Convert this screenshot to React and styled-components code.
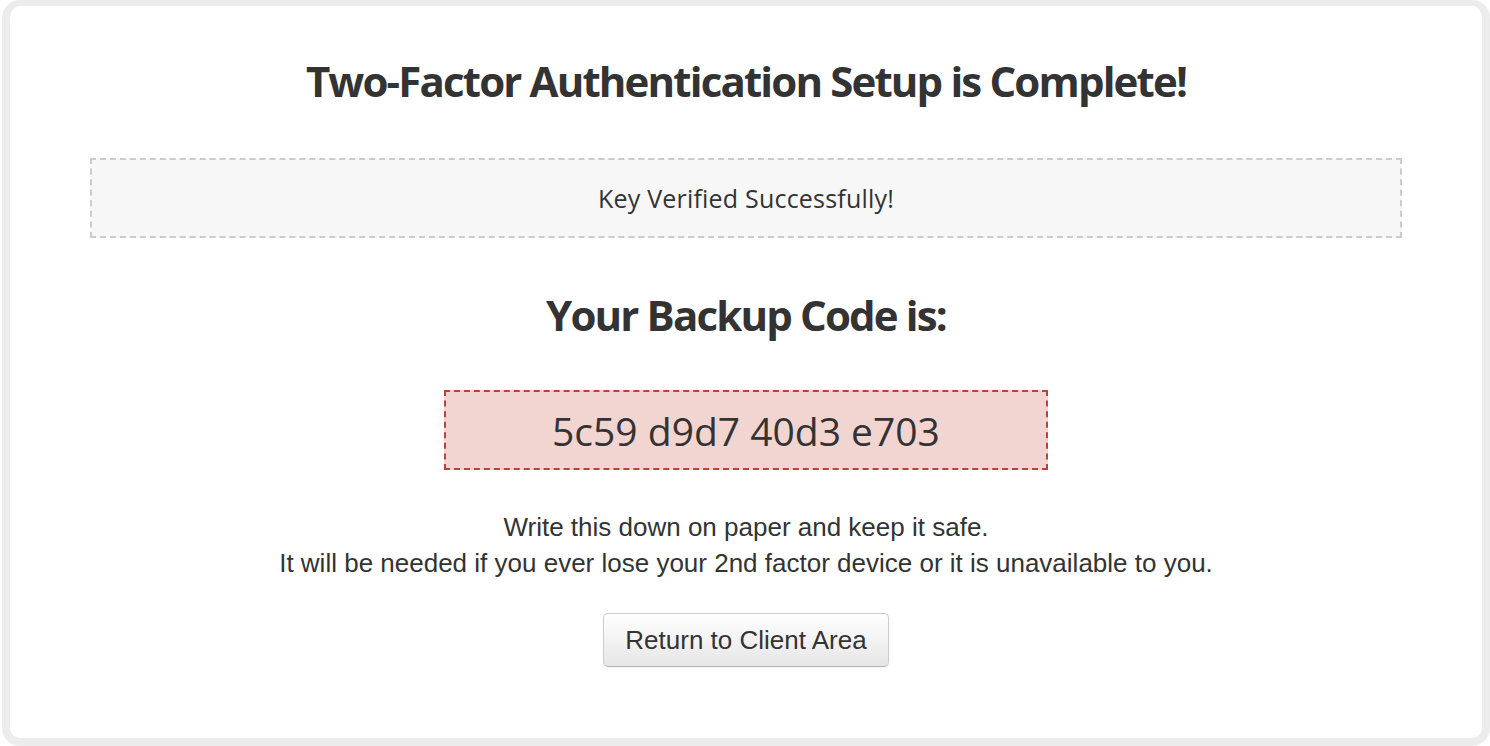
import React from "react";
import styled, { createGlobalStyle } from "styled-components";

const GlobalStyle = createGlobalStyle`
  html, body {
    margin: 0;
    padding: 0;
    background: #ffffff;
  }
  body {
    font-family: "Liberation Sans", Arial, sans-serif;
    color: #333333;
  }
`;

const Frame = styled.div`
  box-sizing: border-box;
  width: 1488px;
  height: 746px;
  margin-left: 2px;
  border: 8px solid #ececec;
  border-top-width: 6px;
  border-radius: 18px;
  background: #ffffff;
  display: flex;
  flex-direction: column;
  align-items: center;
  padding-top: 52px;
`;

const Heading = styled.h1`
  margin: ${(p) => p.$top || 0}px 0 0;
  font-family: "Open Sans", sans-serif;
  font-weight: 700;
  font-size: 42px;
  line-height: 46px;
  letter-spacing: -1.85px;
  color: #333333;
  text-align: center;
`;

const Notice = styled.div`
  box-sizing: border-box;
  align-self: stretch;
  margin: 54px 80px 0;
  height: 80px;
  border: 2px dashed #cccccc;
  background: #f7f7f7;
  display: flex;
  align-items: center;
  justify-content: center;
  font-family: "Open Sans", sans-serif;
  font-size: 25px;
  letter-spacing: 0.2px;
  color: #333333;
`;

const CodeBox = styled.div`
  box-sizing: border-box;
  margin-top: 52px;
  width: 604px;
  height: 80px;
  border: 2px dashed #b5443a;
  background: #f2d4d1;
  display: flex;
  align-items: center;
  justify-content: center;
  font-family: "Open Sans", sans-serif;
  font-size: 39px;
  color: #333333;
`;

const Note = styled.p`
  margin: 39px 0 0;
  font-size: 26px;
  line-height: 36px;
  text-align: center;
  color: #333333;
`;

const Button = styled.button`
  box-sizing: border-box;
  margin-top: 32px;
  width: 286px;
  height: 54px;
  padding: 0;
  border: 1px solid #cccccc;
  border-bottom-color: #b3b3b3;
  border-radius: 5px;
  background: linear-gradient(to bottom, #ffffff 0%, #e6e6e6 100%);
  box-shadow: inset 0 1px 0 rgba(255, 255, 255, 0.2), 0 1px 2px rgba(0, 0, 0, 0.05);
  font-family: "Liberation Sans", Arial, sans-serif;
  font-size: 26px;
  color: #333333;
  cursor: pointer;
`;

export default function App() {
  return (
    <>
      <GlobalStyle />
      <Frame>
        <Heading>Two-Factor Authentication Setup is Complete!</Heading>
        <Notice>Key Verified Successfully!</Notice>
        <Heading $top={54}>Your Backup Code is:</Heading>
        <CodeBox>5c59 d9d7 40d3 e703</CodeBox>
        <Note>
          Write this down on paper and keep it safe.
          <br />
          It will be needed if you ever lose your 2nd factor device or it is unavailable to you.
        </Note>
        <Button>Return to Client Area</Button>
      </Frame>
    </>
  );
}
